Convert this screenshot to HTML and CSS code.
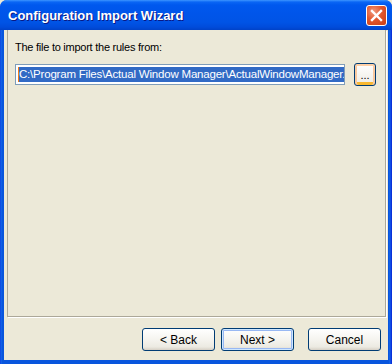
FILE: index.html
```
<!DOCTYPE html>
<html>
<head>
<meta charset="utf-8">
<link rel="stylesheet" href="styles.css">
</head>
<body>
<div class="window">
  <div class="titlebar">
    <span class="title">Configuration Import Wizard</span>
    <span class="close"><svg width="13" height="13" viewBox="0 0 13 13"><path d="M2 2 L11 11 M11 2 L2 11" stroke="#fff" stroke-width="2.4" stroke-linecap="square"/></svg></span>
  </div>
  <div class="client">
    <div class="panel">
      <div class="label">The file to import the rules from:</div>
      <div class="row">
        <div class="field"><span class="caret"></span><span class="sel">C:\Program Files\Actual Window Manager\ActualWindowManager.ini</span></div>
        <div class="browse"><span>...</span></div>
      </div>
    </div>
    <div class="footer">
      <div class="btn">&lt; Back</div>
      <div class="btn next">Next &gt;</div>
      <div class="btn cancel">Cancel</div>
    </div>
  </div>
</div>
</body>
</html>
```
FILE: styles.css
```
html, body { margin: 0; padding: 0; }
body { width: 392px; height: 364px; overflow: hidden; background: #ECE9D8; }
.window {
  width: 392px; height: 364px; box-sizing: border-box;
  background: linear-gradient(to right, #0831D9 0, #166AEE 1px, #0855DD 2px, #0855DD 3px, #0855DD 389px, #166AEE 390px, #0831D9 391px);
  display: flex; flex-direction: column;
  border-radius: 7px 7px 0 0;
  font-family: "Liberation Sans", Arial, sans-serif; font-size: 11px; color: #000;
}
.titlebar {
  height: 30px; flex: none; box-sizing: border-box;
  display: flex; align-items: center; justify-content: space-between;
  padding: 0 5px 0 8px;
  border-radius: 7px 7px 0 0;
  background: linear-gradient(#3D95FF 0, #0A66F5 2px, #0058EE 5px, #0055EA 14px, #0054E6 22px, #004CDB 27px, #0042C8 30px);
}
.title {
  color: #fff; font-weight: bold; font-size: 13px; letter-spacing: 0;
  text-shadow: 1px 1px 0 #0A1883;
  font-family: "Liberation Sans", Arial, sans-serif;
}
.close {
  width: 21px; height: 21px; box-sizing: border-box;
  border: 1px solid #fff; border-radius: 3px;
  background: radial-gradient(circle at 35% 30%, #F09A7E 0, #E2572E 45%, #C93D14 100%);
  display: flex; align-items: center; justify-content: center;
  margin-top: 1px;
}
.client {
  flex: 1; margin: 0 4px 4px; background: #ECE9D8;
  display: flex; flex-direction: column;
}
.panel {
  height: 287px; box-sizing: border-box; margin: 0 2px 0 3px;
  border-left: 1px solid #ACA899; border-right: 1px solid #ACA899; border-bottom: 1px solid #ACA899;
  box-shadow: 1px 1px 0 #fff;
  padding: 11px 6px 0 7px;
}
.label { height: 13px; line-height: 13px; letter-spacing: -0.25px; }
.row { display: flex; align-items: flex-start; margin-top: 9px; }
.field {
  width: 330px; height: 21px; box-sizing: border-box;
  border: 1px solid #7F9DB9; background: #fff;
  padding: 2px 2px; display: flex; align-items: center; overflow: hidden; white-space: nowrap;
  margin-top: 1px;
}
.caret { width: 1px; height: 15px; background: #F27D18; flex: none; }
.sel { background: #316AC5; color: #fff; height: 15px; line-height: 15px; font-size: 11.5px; letter-spacing: -0.2px; padding-right: 2px; }
.browse {
  width: 22px; height: 23px; box-sizing: border-box; margin-left: 9px;
  border: 1px solid #003C74; border-radius: 3px;
  background: linear-gradient(#FFFFFF, #F4F3EE 60%, #ECEBE6);
  box-shadow: inset 0 2px 0 #FFD0A6, inset 2px 0 0 #F8C9A0, inset -2px 0 0 #F8C9A0, inset 0 -3px 0 #F8B830;
  display: flex; align-items: center; justify-content: center;
  font-size: 11px; line-height: 1; padding-top: 2px;
}
.footer {
  flex: 1; display: flex; justify-content: flex-end; align-items: flex-start;
  padding: 11px 7px 0 0;
}
.btn {
  width: 73px; height: 23px; box-sizing: border-box;
  border: 1px solid #003C74; border-radius: 3px;
  background: linear-gradient(#FFFFFF, #F5F4EF 50%, #ECEAE2 85%, #D6D0C5);
  display: flex; align-items: center; justify-content: center;
  font-size: 12px;
}
.btn + .btn { margin-left: 6px; }
.next { box-shadow: inset 0 0 0 1px #CEE7FF, inset 0 0 0 2px #98B8F3; }
.btn.cancel { margin-left: 14px; }
```
